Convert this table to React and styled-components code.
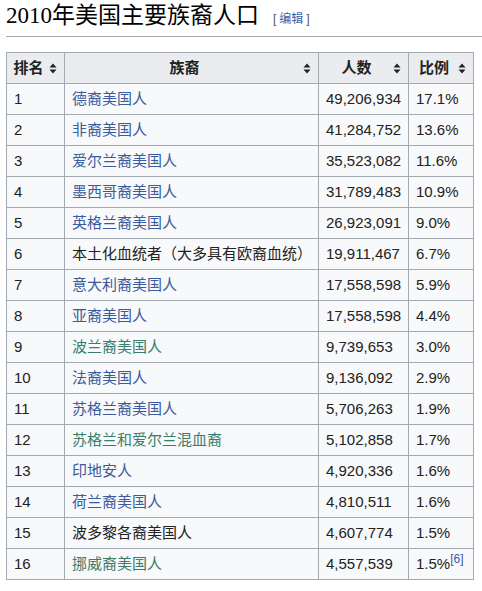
import styled, { createGlobalStyle } from "styled-components";

const rows = [
  [1, "德裔美国人", "link", "49,206,934", "17.1%"],
  [2, "非裔美国人", "link", "41,284,752", "13.6%"],
  [3, "爱尔兰裔美国人", "link", "35,523,082", "11.6%"],
  [4, "墨西哥裔美国人", "link", "31,789,483", "10.9%"],
  [5, "英格兰裔美国人", "link", "26,923,091", "9.0%"],
  [6, "本土化血统者（大多具有欧裔血统）", "text", "19,911,467", "6.7%"],
  [7, "意大利裔美国人", "link", "17,558,598", "5.9%"],
  [8, "亚裔美国人", "link", "17,558,598", "4.4%"],
  [9, "波兰裔美国人", "visited", "9,739,653", "3.0%"],
  [10, "法裔美国人", "link", "9,136,092", "2.9%"],
  [11, "苏格兰裔美国人", "link", "5,706,263", "1.9%"],
  [12, "苏格兰和爱尔兰混血裔", "visited", "5,102,858", "1.7%"],
  [13, "印地安人", "link", "4,920,336", "1.6%"],
  [14, "荷兰裔美国人", "link", "4,810,511", "1.6%"],
  [15, "波多黎各裔美国人", "text", "4,607,774", "1.5%"],
  [16, "挪威裔美国人", "visited", "4,557,539", "1.5%"],
];

const headers = [
  { label: "排名", width: 58 },
  { label: "族裔", width: 254 },
  { label: "人数", width: 90 },
  { label: "比例", width: 65 },
];

function SortIcon() {
  return (
    <svg width="8" height="11" viewBox="0 0 8 11">
      <path d="M4 0.5 L7.5 4.5 L0.5 4.5 Z" fill="#222" />
      <path d="M4 10.5 L7.5 6.5 L0.5 6.5 Z" fill="#222" />
    </svg>
  );
}

export default function App() {
  return (
    <Page>
      <GlobalStyle />
      <Heading>
        2010年美国主要族裔人口
        <EditLink>
          [<a>编辑</a>]
        </EditLink>
      </Heading>
      <Table>
        <colgroup>
          {headers.map((h) => (
            <col key={h.label} style={{ width: h.width }} />
          ))}
        </colgroup>
        <thead>
          <tr>
            {headers.map((h) => (
              <Th key={h.label}>
                <HeadInner>
                  <span>{h.label}</span>
                  <SortIcon />
                </HeadInner>
              </Th>
            ))}
          </tr>
        </thead>
        <tbody>
          {rows.map(([rank, name, kind, count, pct]) => (
            <tr key={rank}>
              <Td>{rank}</Td>
              <Td>
                <Name $kind={kind}>{name}</Name>
              </Td>
              <Td>{count}</Td>
              <Td>
                {pct}
                {rank === 16 && <Ref>[6]</Ref>}
              </Td>
            </tr>
          ))}
        </tbody>
      </Table>
    </Page>
  );
}

const GlobalStyle = createGlobalStyle`
  body {
    margin: 0;
    background: #fff;
    color: #222;
    font-family: "Liberation Sans", "Noto Sans CJK SC", sans-serif;
  }
`;

const Page = styled.div`
  padding: 1px 0 0 6px;
`;

const Heading = styled.h2`
  margin: 0;
  font-family: "Liberation Serif", "Noto Sans CJK SC", serif;
  font-weight: normal;
  font-size: 23px;
  line-height: 30px;
  color: #000;
  padding-bottom: 2px;
  border-bottom: 1px solid #a2a9b1;
`;

const EditLink = styled.span`
  font-family: "Liberation Sans", "Noto Sans CJK SC", sans-serif;
  font-size: 12px;
  color: #54595d;
  margin-left: 14px;
  a {
    color: #3b5fa6;
    margin: 0 3px;
  }
`;

const Table = styled.table`
  margin-top: 15px;
  width: 467px;
  table-layout: fixed;
  border-collapse: collapse;
  background: #f8f9fa;
  font-size: 15px;
  color: #222;
`;

const Th = styled.th`
  background: #eaecf0;
  border: 1px solid #a2a9b1;
  padding: 4px 7px 4px 5px;
  line-height: 22px;
  font-weight: bold;
  white-space: nowrap;
`;

const HeadInner = styled.div`
  display: flex;
  align-items: center;
  gap: 4px;
  span {
    flex: 1;
    text-align: center;
  }
  svg {
    flex: none;
  }
`;

const Td = styled.td`
  border: 1px solid #a2a9b1;
  padding: 4px 7px;
  line-height: 22px;
  white-space: nowrap;
`;

const Name = styled.span`
  color: ${(p) =>
    p.$kind === "link" ? "#3b5ba0" : p.$kind === "visited" ? "#3a7d6c" : "#222"};
`;

const Ref = styled.sup`
  font-size: 12px;
  line-height: 0;
  color: #3b5ba0;
`;
